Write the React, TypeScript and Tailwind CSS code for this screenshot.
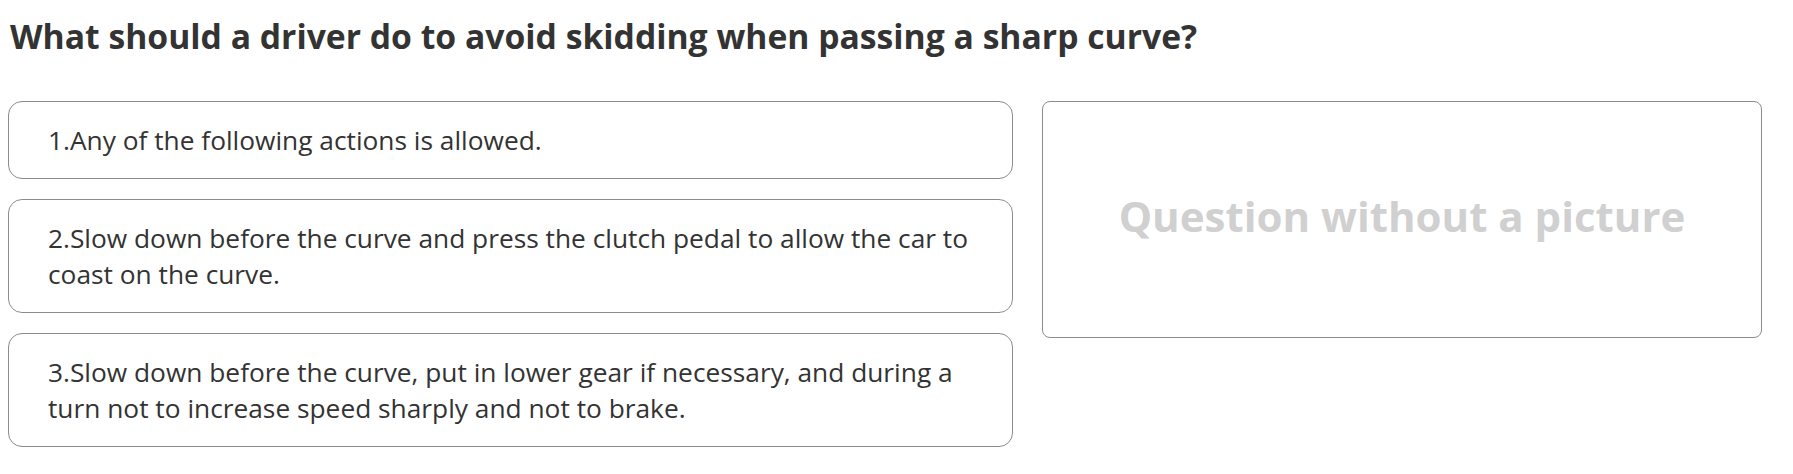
const options = [
  "1.Any of the following actions is allowed.",
  "2.Slow down before the curve and press the clutch pedal to allow the car to coast on the curve.",
  "3.Slow down before the curve, put in lower gear if necessary, and during a turn not to increase speed sharply and not to brake.",
];

export default function App() {
  return (
    <div className="bg-white min-h-screen font-['Open_Sans',sans-serif] text-[#333333]">
      <div className="pl-2 pt-[13px]">
        <h1 className="pl-[2px] text-[33.7px] font-bold leading-[46px]">
          What should a driver do to avoid skidding when passing a sharp curve?
        </h1>
        <div className="mt-[42px] flex gap-[29px] items-start">
          <ul className="w-[1005px] flex flex-col gap-5">
            {options.map((opt) => (
              <li
                key={opt}
                className="border border-[#8c8c8c] rounded-[14px] pl-[39px] pr-8 py-5 text-[26.3px] leading-[36px]"
              >
                {opt}
              </li>
            ))}
          </ul>
          <div className="w-[720px] h-[237px] border border-[#8c8c8c] rounded-[8px] flex items-center justify-center">
            <span className="text-[42px] font-bold leading-[56px] text-[#d0d0d0] -mt-[7px]">
              Question without a picture
            </span>
          </div>
        </div>
      </div>
    </div>
  );
}
